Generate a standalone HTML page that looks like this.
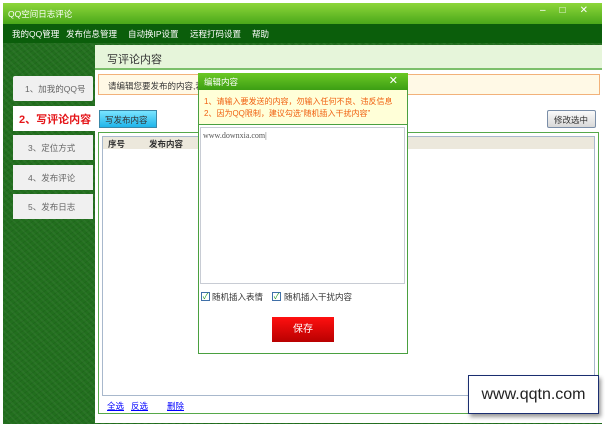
<!DOCTYPE html>
<html><head><meta charset="utf-8"><style>
*{margin:0;padding:0;box-sizing:border-box}
body{width:605px;height:424px;background:#fff;position:relative;overflow:hidden;font-family:"Liberation Sans","Noto Sans CJK SC",sans-serif;font-size:9px;color:#333}
.a{position:absolute}
.m{position:absolute;top:4px;color:#fff;font-size:8.5px}
</style></head><body>
<div class="a" style="left:3px;top:3px;width:599px;height:421px;background:#226f1e;background-image:repeating-linear-gradient(45deg,rgba(255,255,255,.04) 0 2px,transparent 2px 5px),repeating-linear-gradient(-35deg,rgba(0,0,0,.08) 0 1px,transparent 1px 4px)"></div>
<div class="a" style="left:3px;top:3px;width:599px;height:21px;background:linear-gradient(#8ed63a,#4aa81a);color:#fff;padding:5px 0 0 5px;font-size:8.5px">QQ空间日志评论</div>
<div class="a" style="left:540px;top:5px;color:#fff;font-size:10px;letter-spacing:14px">–□✕</div>
<div class="a" style="left:3px;top:24px;width:599px;height:19px;background:#0b5e0b">
<span class="m" style="left:9px">我的QQ管理</span><span class="m" style="left:63px">发布信息管理</span><span class="m" style="left:125px">自动换IP设置</span><span class="m" style="left:187px">远程打码设置</span><span class="m" style="left:249px">帮助</span></div>
<div class="a" style="left:13px;top:76px;width:80px;height:25px;background:#f0f0f0;border-radius:2px;color:#666;padding:7px 0 0 12px;font-size:8.5px">1、加我的QQ号</div>
<div class="a" style="left:13px;top:106px;width:84px;height:25px;background:#fff;color:#e5161a;font-size:11px;font-weight:bold;padding:5px 0 0 6px">2、写评论内容</div>
<div class="a" style="left:13px;top:135px;width:80px;height:25px;background:#f0f0f0;color:#666;padding:7px 0 0 15px;font-size:8.5px">3、定位方式</div>
<div class="a" style="left:13px;top:165px;width:80px;height:25px;background:#f0f0f0;color:#666;padding:7px 0 0 15px;font-size:8.5px">4、发布评论</div>
<div class="a" style="left:13px;top:194px;width:80px;height:25px;background:#f0f0f0;color:#666;padding:7px 0 0 15px;font-size:8.5px">5、发布日志</div>
<div class="a" style="left:95px;top:45px;width:507px;height:378px;background:#fff"></div>
<div class="a" style="left:95px;top:45px;width:507px;height:25px;background:#e6f5da;border-bottom:2px solid #7bbf6a;color:#333;font-size:11px;padding:6px 0 0 12px">写评论内容</div>
<div class="a" style="left:98px;top:74px;width:502px;height:21px;background:#fff9e6;border:1px solid #f2b27a;padding:5px 0 0 9px;font-size:8.5px">请编辑您要发布的内容,若</div>
<div class="a" style="left:99px;top:110px;width:58px;height:18px;background:linear-gradient(#7ae4ff,#20b4ea);border:1px solid #3a88a8;padding:3px 0 0 5px;font-size:8.5px">写发布内容</div>
<div class="a" style="left:547px;top:110px;width:49px;height:18px;background:linear-gradient(#fafafa,#d8d8d8);border:1px solid #7a8ea8;border-radius:2px;padding:3px 0 0 6px;font-size:8.5px">修改选中</div>
<div class="a" style="left:98px;top:132px;width:501px;height:282px;border:1px solid #56a84a"></div>
<div class="a" style="left:102px;top:136px;width:493px;height:260px;border:1px solid #a8b8cc"></div>
<div class="a" style="left:103px;top:137px;width:491px;height:12px;background:#ece8dc;padding:1px 0 0 5px;font-weight:bold;font-size:8.5px">序号<span style="margin-left:24px">发布内容</span></div>
<div class="a" style="left:107px;top:400px;color:#00f;text-decoration:underline;font-size:8.5px">全选</div>
<div class="a" style="left:131px;top:400px;color:#00f;text-decoration:underline;font-size:8.5px">反选</div>
<div class="a" style="left:167px;top:400px;color:#00f;text-decoration:underline;font-size:8.5px">删除</div>
<div class="a" style="left:198px;top:73px;width:210px;height:281px;background:#fff;border:1px solid #4aa040"></div>
<div class="a" style="left:198px;top:73px;width:210px;height:17px;background:linear-gradient(#6cc824,#3c9e14);color:#fff;padding:3px 0 0 6px;font-size:8.5px">编辑内容<span style="position:absolute;right:10px;top:1px;font-size:11px">✕</span></div>
<div class="a" style="left:199px;top:90px;width:208px;height:35px;background:#ffffd8;border-bottom:1px solid #4aa040;color:#f06010;padding:6px 0 0 5px;line-height:12px;font-size:8px;white-space:nowrap">1、请输入要发送的内容，勿输入任何不良、违反信息<br>2、因为QQ限制，建议勾选“随机插入干扰内容”</div>
<div class="a" style="left:200px;top:127px;width:205px;height:157px;border:1px solid #c8ccd4;font-family:'Liberation Serif',serif;font-size:8px;color:#555;padding:3px 0 0 2px">www.downxia.com|</div>
<div class="a" style="left:201px;top:292px;width:9px;height:9px;border:1px solid #4070a8;color:#2a9a2a;font-size:8px;line-height:8px;text-align:center">✓</div>
<div class="a" style="left:212px;top:291px;font-size:8.5px">随机插入表情</div>
<div class="a" style="left:272px;top:292px;width:9px;height:9px;border:1px solid #4070a8;color:#2a9a2a;font-size:8px;line-height:8px;text-align:center">✓</div>
<div class="a" style="left:284px;top:291px;font-size:8.5px">随机插入干扰内容</div>
<div class="a" style="left:272px;top:317px;width:62px;height:25px;background:linear-gradient(#ff1010,#b80000);color:#fff;font-size:10px;text-align:center;line-height:25px">保存</div>
<div class="a" style="left:468px;top:375px;width:131px;height:39px;background:#fff;border:1px solid #1a2e70;box-shadow:2px 3px 4px rgba(0,0,0,.4);font-size:16px;color:#222;text-align:center;line-height:37px">www.qqtn.com</div>
</body></html>
